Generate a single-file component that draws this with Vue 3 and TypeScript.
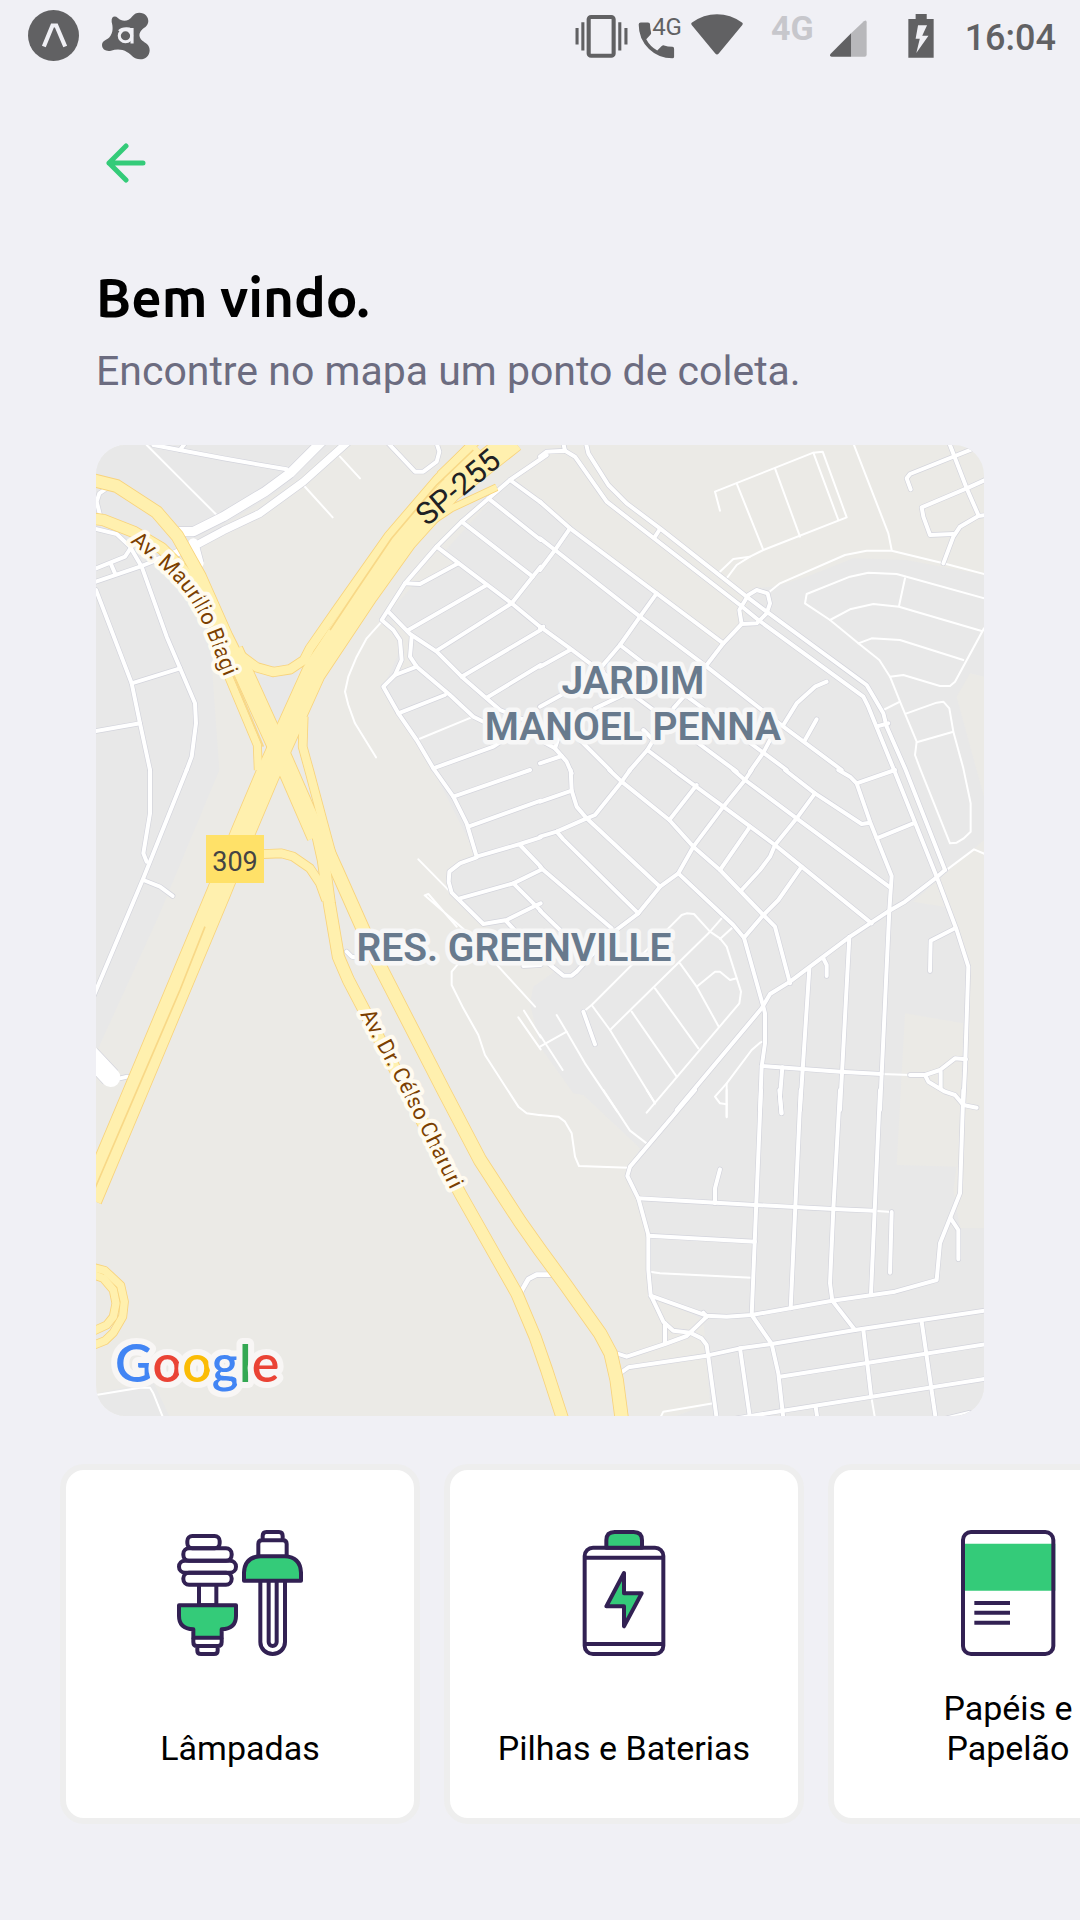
<script setup lang="ts">
interface Sheet {
  x: number
  y: number
  roads: string[]
  lanes: string[]
}
interface Highway {
  d: string
  w: number
}
interface Category {
  id: string
  title: string
}

const categories: Category[] = [
  { id: 'lamps', title: 'Lâmpadas' },
  { id: 'battery', title: 'Pilhas e Baterias' },
  { id: 'paper', title: 'Papéis e\nPapelão' },
]

/* Street network, drawn in map units (three per pixel) and split in sheets. */
const sheets: Sheet[] = [
  {
    x: -18,
    y: -45,
    roads: [
      '190,45 400,85 590,118',
      '270,60 285,40',
      '18,480 125,760 150,880 180,1020',
      '50,175 28,190 20,215 30,255',
      '10,295 80,312 120,350 155,410 230,620 315,820 318,880 305,980 290,1020',
      '18,415 105,380 125,350',
      '62,400 75,430',
      '18,455 150,410 200,390',
      '125,760 270,715',
      '18,903 150,880',
      '895,40 975,125 1000,125 1040,95 1048,65 1040,40',
      '1370,75 1260,150 1115,275 1040,350 945,460 875,570 910,600 930,630 935,690 915,735 880,770 925,850 980,930 1030,1015 1090,1100 1130,1180 1160,1280',
      '1260,150 1352,217',
      '1195,205 1352,330',
      '1115,275 1328,440',
      '1040,350 1265,520 1352,592',
      '1352,410 1328,440 1265,520 1040,662',
      '1190,465 955,600',
      '1352,600 1115,740',
      '1352,705 1190,803',
      '945,460 990,462 1105,400',
      '895,545 960,612 1040,665 1115,740 1230,840 1290,865 1350,880',
      '965,620 960,680 980,710 1080,795 1150,860 1200,885',
      '915,735 980,710',
      '925,850 1065,795',
      '1030,1015 1210,950 1240,930',
    ],
    lanes: [
      '170,45 270,145 380,255',
      '750,80 810,145',
      '640,165 728,262',
      '875,575 830,625 800,680 775,740 765,785 775,825 795,880 858,982',
      '980,930 1150,860',
    ],
  },
  {
    x: 1332,
    y: -45,
    roads: [
      '0,80 20,65 75,62 105,80 200,215 600,525 655,570 970,800 985,830 1060,1015 1190,1340 1250,1500 1285,1610 1275,1920 1270,2020',
      '138,40 145,70 205,165 260,220 360,295 620,500 680,545 980,765 1030,850 1040,890 1095,1015 1215,1320',
      '75,62 70,40',
      '345,320 360,297',
      '625,495 650,480 683,490 690,520 680,550 650,580 605,582 598,540 625,495',
      '605,582 550,640 500,705',
      '0,215 90,295 350,490 550,640',
      '0,325 45,360 300,560 500,710 730,890 905,1020',
      '90,295 45,360 0,420',
      '350,490 300,560 240,645 185,710',
      '240,645 435,795 670,968 740,1020',
      '0,590 90,655 190,730 280,795 590,1025',
      '0,595 10,590',
      '0,710 90,660',
      '0,830 190,725',
      '165,835 280,780',
      '400,835 435,795',
      '730,885 770,820 825,770 860,755',
      '795,930 830,868',
      '630,1025 670,968 690,930',
      '268,1022 322,960 340,930 310,900',
      '322,960 405,1022',
      '90,900 212,1022',
      '0,930 45,955 80,995 95,1030',
      '45,955 60,910',
      '0,1000 65,978',
      '1112,178 1100,145 1110,132 1310,52',
      '1228,40 1280,175 1315,255',
      '1340,148 1280,175 1145,232 1150,260 1170,315 1240,312',
      '1340,255 1315,258 1260,290 1240,320 1210,400',
      '1015,888 1045,880',
    ],
    lanes: [
      '540,242 525,185 820,68 848,65 920,262 670,360 630,380 590,405 560,445',
      '820,68 895,270',
      '590,160 670,360',
      '705,115 780,320',
      '535,430 580,387 630,380',
      '940,40 1045,310 1055,360',
      '683,490 720,460 915,375 980,362 1055,362 1210,400 1340,434',
      '870,570 795,520 800,492 930,440 985,428 1070,432 1340,507',
      '870,570 955,640 1018,690 1050,740 1080,815 1130,935 1125,975 1140,1015 1230,1240 1250,1238 1270,1226 1292,1205 1292,1120 1270,1015 1240,905 1228,835 1210,815 1190,818 1100,850',
      '1130,937 1240,905',
      '1095,445 1077,528',
      '870,570 930,538 1000,522 1077,530 1325,603',
      '955,640 995,625 1080,630 1270,690',
      '1050,740 1090,735 1200,768 1230,768 1245,755 1332,595',
      '1030,840 1080,815',
    ],
  },
  {
    x: -18,
    y: 975,
    roads: [
      '180,0 180,130 160,250 170,275',
      '290,0 160,325 10,680',
      '160,330 210,350 248,378',
      '1160,262 1110,280 1078,305 1076,335 1085,368 1180,462 1250,450 1330,410 1352,400',
      '1090,80 1320,0',
      '1135,170 1352,92',
      '1160,260 1290,222 1352,202',
      '1110,385 1270,340 1352,300',
      '1290,225 1352,290',
      '1270,340 1352,422',
      '1250,455 1352,565',
      '770,545 785,560 810,565',
      '1300,588 1352,585',
      '90,925 112,920',
    ],
    lanes: [
      '985,268 1100,385',
      '1100,470 1015,372 1004,376 1135,490 1335,710',
      '1110,575 1085,605 1085,645 1120,715 1165,795 1185,855 1285,1010 1310,1030 1352,1036',
      '1285,742 1352,838',
      '1302,722 1352,802',
    ],
  },
  {
    x: 1332,
    y: 975,
    roads: [
      '0,95 95,62',
      '92,0 95,62 110,110 140,145',
      '0,200 50,185 140,145 165,135 245,35 270,0',
      '140,145 360,350',
      '50,185 70,208 295,430',
      '0,290 10,300 215,475',
      '0,422 60,480',
      '208,0 245,35 388,150 460,230 540,300 670,435 705,470 750,640',
      '400,0 550,110 705,225 785,290 995,460',
      '580,0 615,30 770,145 1050,352',
      '735,0 825,70 965,162 990,158',
      '895,0 930,20 950,40 990,155 1055,318 1048,420 1020,1020',
      '635,0 615,30 550,110 460,230 415,310 360,350 295,430 215,490 110,605 95,617 70,617 0,560',
      '470,45 388,150',
      '630,170 540,300',
      '825,70 770,145 705,225 690,260 660,300 605,360',
      '785,290 715,390 670,435 612,503',
      '415,310 580,465 612,503 670,710 675,730 675,820 665,890 660,1020',
      '1215,300 1190,322 1095,395 1048,422 930,500 750,635 690,672 665,715 410,1020',
      '950,40 1065,0',
      '1010,205 1120,160',
      '928,500 900,1020',
      '808,595 780,1020',
      '850,565 860,585 860,618',
      '1245,475 1172,512 1170,603',
      '665,888 900,905 1025,912',
      '1110,915 1155,915 1200,900 1245,865 1278,868',
      '1155,915 1165,935 1215,965 1245,975 1270,1005 1310,1013',
      '1202,905 1202,955',
      '727,892 720,980 724,1030',
      '130,725 165,823',
    ],
    lanes: [
      '1190,322 1302,238 1340,254',
      '1025,912 1110,915',
      '130,725 155,705 385,475 425,435 440,430 462,432 510,485 540,505 560,530 603,665 598,700 320,1028',
      '155,705 210,780 345,1000',
      '545,445 510,485 210,780',
      '580,470 540,507',
      '420,580 470,650 535,768',
      '470,650 525,605 540,605 570,630 590,625',
      '345,655 475,835',
      '275,725 410,920',
      '50,735 80,785 135,880 232,1025',
      '80,785 0,830',
      '0,795 68,900',
      '675,812 660,818 635,840 560,940 525,980 540,1000 560,1003',
      '560,940 560,1040',
    ],
  },
  {
    x: -18,
    y: 1935,
    roads: [],
    lanes: ['18,915 150,893 180,893 190,910 220,985'],
  },
  {
    x: 1332,
    y: 1935,
    roads: [
      '465,0 270,230 262,258 295,325 325,435 325,540 332,615 370,695 400,722 450,728 485,745 500,765 505,800 530,985',
      '295,325 645,345 880,357 1000,362',
      '1055,366 1050,548',
      '325,437 645,455',
      '663,0 635,675',
      '782,0 752,655',
      '900,0 880,357 870,580 877,632 945,720',
      '1020,0 993,610',
      '525,340 525,295 540,238',
      '1270,0 1260,310 1200,460 1190,570 1065,605 877,632 635,675 560,680 500,677 332,617',
      '490,668 500,680',
      '1232,385 1255,420 1255,508',
      '375,700 375,760',
      '230,790 260,800 375,762 440,738 500,680',
      '240,850 265,832 500,797 600,775 695,762 945,720 1340,661',
      '635,675 695,762 715,850 730,985',
      '600,775 630,985',
      '970,720 993,915',
      '1145,695 1187,985',
      '720,860 1340,762',
      '590,985 730,962 1340,866',
      '827,950 832,985',
      '1220,985 1290,968',
      '718,0 725,70',
    ],
    lanes: [
      '1000,362 1055,366',
      '330,545 360,550 635,563',
      '993,915 1005,985',
      '360,985 370,965 520,940',
      '0,75 55,80 75,95 95,130 105,200 117,228 265,233',
      '190,0 270,122 320,160',
      '320,0 345,40',
      '560,0 560,82',
    ],
  },
]

const avenues: Highway[] = [
  { d: '710,20 600,130 525,185 400,260 310,305 265,305', w: 28 },
  { d: '780,30 640,155 510,250 400,302 320,345 200,393', w: 22 },
  { d: '310,340 326,400', w: 30 },
  { d: '0,1876 62,1942', w: 58 },
  { d: '1295,2582 1315,2547 1340,2534 1390,2534', w: 14 },
]

const highways: Highway[] = [
  { d: '0,148 80,168 200,246 262,318 330,440 410,620 480,760', w: 36 },
  { d: '0,265 40,270 130,305 215,355 270,410 330,480 390,620', w: 32 },
  { d: '395,690 502,945 505,1020', w: 22 },
  { d: '430,660 580,990 680,1220', w: 56 },
  { d: '680,1200 700,1290 718,1420 745,1580 775,1650 1110,2290 1280,2590 1335,2720 1370,2820 1422,2980', w: 34 },
  { d: '690,1210 740,1320 860,1590 1060,1980 1170,2190 1290,2375 1350,2460 1425,2562 1530,2710 1562,2770 1580,2850 1597,2980', w: 38 },
  { d: '1170,20 1045,145 895,320 740,540 660,655 642,690 600,718 550,726 500,712 450,675', w: 26 },
  { d: '1270,30 1080,180 945,330 830,490 670,730 530,1040 458,1210 385,1390 138,1980 0,2308', w: 70 },
  { d: '1160,50 1060,145', w: 50 },
  { d: '965,315 1085,235 1220,172', w: 18 },
  { d: '641,860 638,950 660,1030 700,1180 738,1320', w: 24 },
  { d: '500,1273 575,1270 610,1280 660,1315 690,1360 708,1410', w: 24 },
  { d: '0,2510 45,2522 92,2566 103,2615 98,2660 70,2708 45,2732 0,2750', w: 22 },
  { d: '0,2530 40,2545 70,2580 78,2620 70,2660 50,2685 0,2708', w: 22 },
]

const land: string =
  '875,570 1260,150 1350,210 1890,650 1950,590 1990,475 2050,470 2150,440 2290,385 2450,390 2682,435 ' +
  '2682,1230 2470,1415 2570,1432 2640,1620 2630,1780 2600,2210 2590,2280 2610,2395 2682,2395 2682,2980 ' +
  '1700,2980 1860,2920 1850,2780 1840,2670 1680,2590 1675,2410 1615,2220 1650,2155 1480,1995 1450,1990 ' +
  '1400,1920 1350,1850 1320,1720 1330,1670 1400,1620 1350,1580 1180,1485 1080,1390 1080,1320 1160,1280 ' +
  '1030,1020 880,770 940,640'
</script>

<template>
  <div class="page">
    <header class="status">
      <div class="status-left">
        <svg width="51" height="51" viewBox="81 30 148 154" preserveAspectRatio="none" aria-hidden="true">
          <ellipse cx="155" cy="107" rx="74" ry="77" fill="#616163" />
          <path d="M127 140 152 77h11l26 63" fill="none" stroke="#f0f0f5" stroke-width="12" />
        </svg>
        <svg width="48" height="51" viewBox="297 30 139 154" preserveAspectRatio="none" aria-hidden="true">
          <path
            d="M343 54c12 12 30 12 42-5 6-8 12-11 20-11 16 0 28 13 26 28-2 12-10 16-17 22-12 12-11 24 0 35 8 7 22 12 21 30-1 15-12 26-27 26-20 0-24-14-39-22-14-9-30-9-46-4-13 3-26-3-26-17 0-13 12-14 21-23 12-14 11-32 7-47-2-16 9-20 18-12z"
            fill="#616163"
          />
          <circle cx="365" cy="108" r="18" fill="none" stroke="#f0f0f5" stroke-width="9" />
          <path d="M384 84v47M347 94c8-9 36-12 37 4" fill="none" stroke="#f0f0f5" stroke-width="9" />
        </svg>
      </div>
      <div class="status-right">
        <svg width="53" height="51" viewBox="102 30 155 154" preserveAspectRatio="none" aria-hidden="true">
          <rect x="142" y="51" width="73" height="117" rx="7" fill="none" stroke="#616163" stroke-width="12" />
          <path d="M108 84v50M125 67v85M233 67v85M251 84v50" stroke="#616163" stroke-width="9" />
        </svg>
        <span class="call">
          <svg width="44" height="51" viewBox="285 30 128 154" preserveAspectRatio="none" aria-hidden="true">
            <path
              d="M287 74q0-6 6-6h21q6 0 6 6 0 12 3 24 1 4-2 7l-12 13q11 22 32 34l13-13q3-3 7-2 10 4 24 4 5 0 5 6v24q0 5-5 5-40 0-68-28-30-30-30-74z"
              fill="#616163"
            />
          </svg>
          <span class="call-net">4G</span>
        </span>
        <svg class="wifi" width="52" height="51" viewBox="440 30 150 154" preserveAspectRatio="none" aria-hidden="true">
          <path d="M443 68Q476 43 515 43t72 25q4 3 1 7l-68 86q-5 7-10 0L442 75q-3-4 1-7z" fill="#616163" />
        </svg>
        <span class="net">4G</span>
        <svg class="signal" width="37" height="51" viewBox="845 30 107 154" preserveAspectRatio="none" aria-hidden="true">
          <path d="M906 100 943 64q8-5 8 3v98q0 6-6 6h-39z" fill="#b8b8bb" />
          <path d="M906 100v71h-56q-8-2-3-9z" fill="#616163" />
        </svg>
        <svg class="power" width="26" height="51" viewBox="1070 30 75 154" preserveAspectRatio="none" aria-hidden="true">
          <path d="M1092 42h32v15h20v117h-73V57h21z" fill="#616163" />
          <path d="M1099 76h26l-14 32h18l-35 52 10-43h-12z" fill="#f0f0f5" />
        </svg>
        <time class="clock">16:04</time>
      </div>
    </header>

    <main>
      <div class="intro">
        <button class="back" type="button" aria-label="Voltar">
          <svg width="40" height="40" viewBox="0 0 40 40" aria-hidden="true">
            <path
              d="M37 20H3M20 3 3 20 20 37"
              fill="none"
              stroke="#34cb79"
              stroke-width="5"
              stroke-linecap="round"
              stroke-linejoin="round"
            />
          </svg>
        </button>
        <h1>Bem vindo.</h1>
        <p>Encontre no mapa um ponto de coleta.</p>
      </div>

      <section class="map" aria-label="Mapa">
        <svg class="map-art" viewBox="0 0 888 971">
          <defs>
            <path id="biagi" d="M34 97C56 115 80 132 96 158S114 200 136 250" />
            <path id="charuri" d="M264 569 306 647 376 788" />
          </defs>
          <g transform="scale(.33333333)">
            <g transform="translate(-18 -45)" fill="#e8e8e8">
              <polygon
                points="0,0 790,0 620,150 330,330 340,430 390,650 365,700 388,1020 205,1460 18,1870 0,1900"
              />
              <polygon points="480,750 550,735 630,710 565,900" />
              <polygon :points="land" />
              <polygon points="0,2894 190,2855 248,2980 0,2980" />
              <g fill="#ebeae6">
                <polygon points="2445,1750 2620,1780 2605,2210 2420,2205" />
                <polygon points="2640,730 2600,800 2660,1020 2682,1100 2682,740" />
                <polygon points="1000,425 1040,365 1095,400 990,462 945,462" />
                <polygon points="905,570 965,620 960,680 980,705 915,735 938,690 930,630" />
              </g>
            </g>

            <g v-for="(s, i) in sheets" :key="'t' + i" class="lane" :transform="`translate(${s.x} ${s.y})`">
              <polyline v-for="d in s.lanes" :key="d" :points="d" />
            </g>
            <g v-for="(s, i) in sheets" :key="'c' + i" class="road-edge" :transform="`translate(${s.x} ${s.y})`">
              <polyline v-for="d in s.roads" :key="d" :points="d" />
            </g>
            <g class="avenue-edge" transform="translate(-18 -45)">
              <polyline v-for="h in avenues" :key="h.d" :points="h.d" :stroke-width="h.w + 4" />
            </g>
            <g v-for="(s, i) in sheets" :key="'r' + i" class="road" :transform="`translate(${s.x} ${s.y})`">
              <polyline v-for="d in s.roads" :key="d" :points="d" />
            </g>
            <g class="avenue" transform="translate(-18 -45)">
              <polyline v-for="h in avenues" :key="h.d" :points="h.d" :stroke-width="h.w" />
            </g>
            <g class="highway-edge" transform="translate(-18 -45)">
              <polyline v-for="h in highways" :key="h.d" :points="h.d" :stroke-width="h.w + 5" />
            </g>
            <g class="highway" transform="translate(-18 -45)">
              <polyline v-for="h in highways" :key="h.d" :points="h.d" :stroke-width="h.w" />
              <path
                d="M345 1490 270 1680 120 2030 0 2310M1150 60 1040 165 905 325 800 480 720 600M420 710 520 950"
                stroke="#f8d887"
                stroke-width="5"
              />
            </g>
          </g>

          <g class="district" text-anchor="middle">
            <text x="537" y="249">JARDIM</text>
            <text x="537" y="295">MANOEL PENNA</text>
            <text x="418" y="516">RES. GREENVILLE</text>
          </g>
          <text class="street"><textPath href="#biagi">Av. Maurílio Biagi</textPath></text>
          <text class="street"><textPath href="#charuri">Av. Dr. Célso Charuri</textPath></text>
          <text class="motorway" transform="translate(331 82) rotate(-40)">SP-255</text>
          <rect x="110" y="390" width="58" height="48" fill="#ffe168" />
          <text class="shield" x="139" y="426" text-anchor="middle">309</text>
          <text class="brand" x="19" y="937">
            <tspan fill="#4285f4">G</tspan><tspan fill="#ea4335">o</tspan><tspan fill="#fbbc05">o</tspan
            ><tspan fill="#4285f4">g</tspan><tspan fill="#34a853">l</tspan><tspan fill="#ea4335">e</tspan>
          </text>
        </svg>
      </section>

      <div class="items">
        <button v-for="c in categories" :key="c.id" class="item" type="button">
          <svg v-if="c.id === 'lamps'" class="item-icon" viewBox="381 225 378 378" aria-hidden="true">
            <rect x="412" y="243" width="97" height="37" rx="15" />
            <rect x="400" y="280" width="145" height="37" rx="17" />
            <rect x="387" y="317" width="171" height="36" rx="18" />
            <rect x="400" y="353" width="145" height="36" rx="17" />
            <path d="M447 389v62h52v-62" />
            <path d="M387 451h171v32q0 38-43 40v25h-85v-25q-43-2-43-40z" fill="#34cb79" />
            <path d="M430 548v13q0 12 11 12h63q11 0 11-12v-13M442 573v14q0 10 11 10h39q11 0 11-10v-14" />
            <path d="M638 256v-13q0-12 11-12h38q11 0 11 12v13M625 304v-37q0-11 11-11h63q11 0 11 11v37" />
            <path d="M582 377v-24q2-47 49-49h73q47 2 49 49v24z" fill="#34cb79" />
            <path d="M631 377v184a37 36 0 0 0 74 0V377M656 377v184a12 12 0 0 0 24 0V377" />
          </svg>
          <svg v-else-if="c.id === 'battery'" class="item-icon" viewBox="393 225 378 378" aria-hidden="true">
            <rect x="464" y="278" width="236" height="319" rx="25" />
            <path d="M529 278v-22q0-25 25-25h57q25 0 25 25v22z" fill="#34cb79" />
            <path d="M464 308h236M464 567h236" />
            <path d="M582 354v61h53l-53 99v-60h-53z" fill="#34cb79" />
          </svg>
          <svg v-else class="item-icon" viewBox="435 225 378 378" aria-hidden="true">
            <path d="M483 266h283v141H483z" fill="#34cb79" stroke="none" />
            <rect x="489" y="231" width="271" height="366" rx="24" />
            <path d="M523 444h107M523 473h107M523 503h107" />
          </svg>
          <span class="item-title">{{ c.title }}</span>
        </button>
      </div>
    </main>
  </div>
</template>

<style>
html,
body {
  background: #f0f0f5;
}
</style>

<style scoped>
.page {
  min-height: 100vh;
  box-sizing: border-box;
  overflow: hidden;
  background: #f0f0f5;
  font-family: Roboto, "Liberation Sans", sans-serif;
}
.status {
  display: flex;
  justify-content: space-between;
  padding: 10px 24px 0 28px;
  color: #616163;
}
.status svg {
  display: block;
}
.status-left,
.status-right {
  display: flex;
}
.status-left {
  gap: 23px;
}
.call {
  position: relative;
  margin-left: 10px;
}
.call-net {
  position: absolute;
  top: 3px;
  right: 0;
  font-size: 24px;
  line-height: 28px;
}
.wifi {
  margin-left: 9px;
}
.net {
  margin-left: 28px;
  font-size: 34px;
  font-weight: 700;
  line-height: 36px;
  color: #c7c7cc;
}
.signal {
  margin-left: 16px;
}
.power {
  margin-left: 41px;
}
.clock {
  margin-left: 31px;
  font-size: 36px;
  font-weight: 500;
  line-height: 56px;
}
.intro {
  padding: 0 96px;
}
.back {
  display: block;
  margin: 67px 0 0;
  padding: 10px;
  border: 0;
  background: none;
}
.back svg {
  display: block;
}
h1 {
  margin: 69px 0 0;
  font-family: Ubuntu, "Noto Sans", sans-serif;
  font-size: 53px;
  font-weight: 700;
  line-height: 72px;
  color: #000;
}
p {
  margin: 13px 0 0;
  font-size: 41px;
  line-height: 48px;
  color: #6c6c80;
}
.map {
  margin: 50px 96px 0;
  overflow: hidden;
  border-radius: 30px;
  background: #ebeae6;
}
.map-art {
  display: block;
  width: 100%;
  height: auto;
}
.map-art polyline,
.highway path {
  fill: none;
  stroke-linejoin: round;
}
.lane,
.road,
.avenue {
  stroke: #fff;
  stroke-linecap: round;
}
.lane {
  stroke-width: 6;
}
.road {
  stroke-width: 12;
}
.road-edge {
  stroke: #d3d4dc;
  stroke-width: 16;
  stroke-linecap: round;
}
.avenue-edge {
  stroke: #d3d4dc;
}
.highway-edge {
  stroke: #f8d37c;
}
.highway {
  stroke: #fff0ae;
}
.map-art text {
  paint-order: stroke;
  stroke-linejoin: round;
}
.district {
  font-size: 39px;
  font-weight: 600;
  fill: #687a8d;
  stroke: #f7f7f7;
  stroke-width: 9px;
}
.street {
  font-size: 22px;
  fill: #7b3f00;
  stroke: #fffbf0;
  stroke-width: 8px;
}
.motorway {
  font-size: 31px;
  fill: #202124;
}
.shield {
  font-size: 27px;
  fill: #444;
}
.brand {
  font-family: Lato, sans-serif;
  font-size: 52px;
  font-weight: 600;
  stroke: #f8f6f5;
  stroke-width: 12px;
}
.items {
  display: flex;
  gap: 24px;
  margin-top: 48px;
  padding: 0 60px;
  overflow-x: auto;
  scrollbar-width: none;
}
.item {
  display: flex;
  flex: none;
  flex-direction: column;
  align-items: center;
  justify-content: space-between;
  box-sizing: border-box;
  width: 360px;
  height: 360px;
  padding: 60px 36px 50px;
  border: 6px solid #eee;
  border-radius: 24px;
  background: #fff;
  font-family: inherit;
  color: #000;
}
.item-icon {
  display: block;
  width: 126px;
  height: 126px;
  fill: none;
  stroke: #322153;
  stroke-width: 12;
  stroke-linejoin: round;
}
.item-title {
  font-size: 34px;
  line-height: 40px;
  text-align: center;
  white-space: pre-line;
}
</style>
